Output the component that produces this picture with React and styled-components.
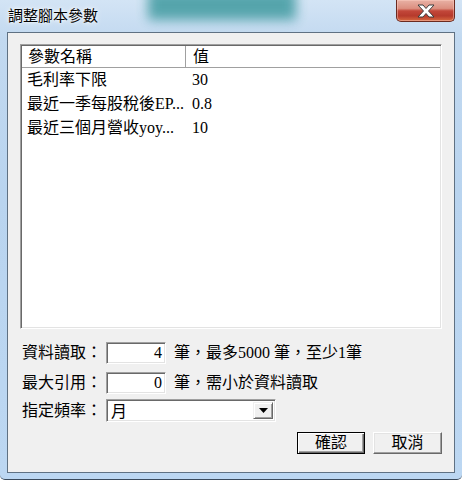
import React from "react";
import styled, { createGlobalStyle } from "styled-components";

const UI_FONT = `"Liberation Serif", "Noto Sans CJK TC", serif`;

const GlobalStyle = createGlobalStyle`
	html, body {
		margin: 0;
		padding: 0;
		background: #ffffff;
	}
	body {
		width: 462px;
		height: 480px;
		overflow: hidden;
	}
`;

const params = [
	{ name: "毛利率下限", value: "30" },
	{ name: "最近一季每股稅後EP...", value: "0.8" },
	{ name: "最近三個月營收yoy...", value: "10" },
];

export default function App() {
	return (
		<>
			<GlobalStyle />
			<Window>
				<TitleBar>
					<Title>調整腳本參數</Title>
					<CloseButton aria-label="關閉">
						<svg width="18" height="14" viewBox="-1 -1 18 14">
							<polygon
								points="0,0 5,0 8,3.5 11,0 16,0 10.5,6 16,12 11,12 8,8.5 5,12 0,12 5.5,6"
								fill="#ffffff"
								stroke="#3d3d3d"
								strokeWidth="1"
								strokeLinejoin="round"
							/>
						</svg>
					</CloseButton>
				</TitleBar>
				<Client>
					<ListBox>
						<HeaderRow>
							<HeaderCell $first>參數名稱</HeaderCell>
							<HeaderCell>值</HeaderCell>
						</HeaderRow>
						{params.map((p) => (
							<Row key={p.name}>
								<NameCell>{p.name}</NameCell>
								<ValueCell>{p.value}</ValueCell>
							</Row>
						))}
					</ListBox>

					<FieldRow $gap={13}>
						<Label>資料讀取：</Label>
						<NumberBox>4</NumberBox>
						<Hint>筆，最多5000 筆，至少1筆</Hint>
					</FieldRow>
					<FieldRow $gap={8}>
						<Label>最大引用：</Label>
						<NumberBox>0</NumberBox>
						<Hint>筆，需小於資料讀取</Hint>
					</FieldRow>
					<FieldRow $gap={5} $height={23}>
						<Label>指定頻率：</Label>
						<Combo>
							<ComboText>月</ComboText>
							<DropButton>
								<svg width="9" height="5" viewBox="0 0 9 5">
									<polygon points="0,0 9,0 4.5,5" fill="#000000" />
								</svg>
							</DropButton>
						</Combo>
					</FieldRow>

					<ButtonBar>
						<PushButton $default $w={68}>確認</PushButton>
						<PushButton $w={69}>取消</PushButton>
					</ButtonBar>
				</Client>
			</Window>
		</>
	);
}

const Window = styled.div`
	position: relative;
	box-sizing: border-box;
	width: 462px;
	height: 480px;
	display: flex;
	flex-direction: column;
	padding: 0 7px 6px;
	border-bottom: 1px solid #3a4a5c;
	border-radius: 0 0 5px 5px;
	overflow: hidden;
	background: linear-gradient(
		180deg,
		#d3e4f5 0%,
		#c2d9f0 8%,
		#b9d4ef 40%,
		#bcd7f2 100%
	);

	&::before {
		content: "";
		position: absolute;
		left: 148px;
		top: -10px;
		width: 148px;
		height: 30px;
		background: #489ea4;
		filter: blur(6px);
		opacity: 0.9;
	}
`;

const TitleBar = styled.div`
	position: relative;
	z-index: 1;
	height: 32px;
	flex-shrink: 0;
	display: flex;
	align-items: flex-start;
	padding-left: 1px;
`;

const Title = styled.div`
	margin-top: 5px;
	font-family: "Noto Sans CJK TC", sans-serif;
	font-size: 15px;
	line-height: 20px;
	color: #000000;
	text-shadow: 0 0 6px rgba(255, 255, 255, 0.95), 0 0 3px #ffffff;
`;

const CloseButton = styled.div`
	margin-left: auto;
	box-sizing: border-box;
	width: 59px;
	height: 22px;
	display: flex;
	align-items: center;
	justify-content: center;
	padding-top: 1px;
	border: 1px solid #6b2a20;
	border-top: none;
	border-radius: 0 0 5px 5px;
	box-shadow: inset 0 0 0 1px rgba(255, 210, 200, 0.45);
	background: linear-gradient(
		180deg,
		#e8b1a5 0%,
		#dc8f80 40%,
		#c2473a 52%,
		#b63a2c 75%,
		#d7693f 100%
	);
`;

const Client = styled.div`
	flex: 1;
	box-sizing: border-box;
	display: flex;
	flex-direction: column;
	padding: 11px 12px 0;
	border: 1px solid #5f7183;
	background: #f0f0f0;
	font-family: ${UI_FONT};
	font-size: 16px;
	color: #000000;
`;

const ListBox = styled.div`
	box-sizing: border-box;
	height: 285px;
	padding: 1px;
	border: 1px solid;
	border-color: #a0a0a0 #ffffff #ffffff #a0a0a0;
	box-shadow: inset 1px 1px 0 #696969, inset -1px -1px 0 #e3e3e3;
	background: #ffffff;
	overflow: hidden;
`;

const HeaderRow = styled.div`
	display: flex;
	height: 21px;
	border-bottom: 1px solid #a0a0a0;
	background: #ffffff;
`;

const HeaderCell = styled.div`
	box-sizing: border-box;
	width: ${(p) => (p.$first ? "164px" : "auto")};
	flex: ${(p) => (p.$first ? "none" : "1")};
	padding-left: ${(p) => (p.$first ? "6px" : "7px")};
	border-right: ${(p) => (p.$first ? "1px solid #a0a0a0" : "none")};
	line-height: 21px;
	white-space: nowrap;
`;

const Row = styled.div`
	display: flex;
	height: 24px;
	line-height: 24px;
	white-space: nowrap;
`;

const NameCell = styled.div`
	box-sizing: border-box;
	width: 164px;
	padding-left: 5px;
	overflow: hidden;
`;

const ValueCell = styled.div`
	padding-left: 6px;
`;

const FieldRow = styled.div`
	display: flex;
	align-items: center;
	height: ${(p) => p.$height || 22}px;
	margin-top: ${(p) => p.$gap}px;
	white-space: nowrap;
`;

const Label = styled.div`
	width: 84px;
	padding-left: 2px;
	line-height: 22px;
`;

const sunken = `
	box-sizing: border-box;
	border: 1px solid;
	border-color: #a0a0a0 #ffffff #ffffff #a0a0a0;
	box-shadow: inset 1px 1px 0 #696969, inset -1px -1px 0 #e3e3e3;
	background: #ffffff;
`;

const NumberBox = styled.div`
	${sunken}
	width: 60px;
	height: 22px;
	padding: 0 3px 0 2px;
	text-align: right;
	line-height: 20px;
`;

const Hint = styled.div`
	margin-left: 8px;
	line-height: 22px;
`;

const Combo = styled.div`
	${sunken}
	width: 170px;
	height: 23px;
	display: flex;
	align-items: stretch;
	padding: 2px;
`;

const ComboText = styled.div`
	flex: 1;
	padding-left: 2px;
	line-height: 19px;
`;

const DropButton = styled.div`
	box-sizing: border-box;
	width: 20px;
	display: flex;
	align-items: center;
	justify-content: center;
	border: 1px solid;
	border-color: #f0f0f0 #696969 #696969 #f0f0f0;
	box-shadow: inset 1px 1px 0 #ffffff, inset -1px -1px 0 #a0a0a0;
	background: #f0f0f0;
`;

const ButtonBar = styled.div`
	display: flex;
	justify-content: flex-end;
	gap: 8px;
	margin-top: 10px;
`;

const PushButton = styled.div`
	box-sizing: border-box;
	width: ${(p) => p.$w}px;
	height: 22px;
	display: flex;
	align-items: center;
	justify-content: center;
	border: 1px solid;
	border-color: ${(p) =>
		p.$default ? "#000000" : "#ffffff #696969 #696969 #ffffff"};
	box-shadow: ${(p) =>
		p.$default
			? "inset 1px 1px 0 #ffffff, inset -1px -1px 0 #696969, inset -2px -2px 0 #a0a0a0"
			: "inset -1px -1px 0 #a0a0a0, inset 1px 1px 0 #e3e3e3"};
	background: #f0f0f0;
	line-height: 20px;
`;
